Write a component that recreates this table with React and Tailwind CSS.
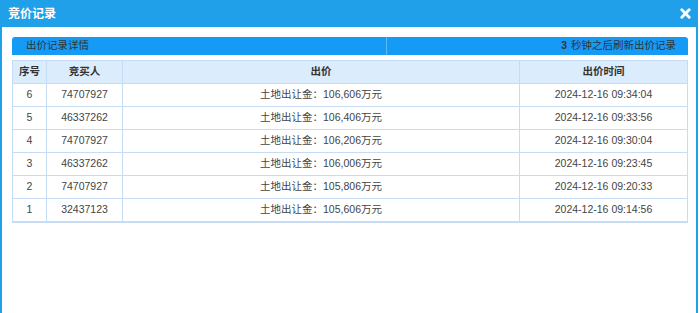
export default function App() {
  const rows = [
    { no: 6, bidder: "74707927", price: "106,606", time: "2024-12-16 09:34:04" },
    { no: 5, bidder: "46337262", price: "106,406", time: "2024-12-16 09:33:56" },
    { no: 4, bidder: "74707927", price: "106,206", time: "2024-12-16 09:30:04" },
    { no: 3, bidder: "46337262", price: "106,006", time: "2024-12-16 09:23:45" },
    { no: 2, bidder: "74707927", price: "105,806", time: "2024-12-16 09:20:33" },
    { no: 1, bidder: "32437123", price: "105,606", time: "2024-12-16 09:14:56" },
  ];

  return (
    <div
      className="w-[698px] h-[313px] flex flex-col bg-white text-[10.5px] text-[#444]"
      style={{ fontFamily: '"Liberation Sans", Arial, "Noto Sans CJK SC", sans-serif' }}
    >
      <div className="h-[27px] shrink-0 bg-[#1fa0e8] flex items-center justify-between pl-[8px] pr-[7px]">
        <span className="text-white font-bold text-[12px]">竞价记录</span>
        <svg width="11" height="11" viewBox="0 0 12 12">
          <path d="M2 2 L10 10 M10 2 L2 10" stroke="#fff" strokeWidth="3.2" strokeLinecap="round" />
        </svg>
      </div>
      <div className="flex-1 border-l-2 border-r-2 border-[#1fa0e8] pl-[10px] pt-[10px]">
        <div className="w-[676px]">
          <div className="h-[18px] bg-[#159bf6] rounded-t-[3px] flex text-[#333]">
            <div className="w-[375px] border-r border-[#5cbaf8] pl-[14px] flex items-center">出价记录详情</div>
            <div className="flex-1 flex items-center justify-end pr-[12px]">
              <span className="font-bold mr-[4px]">3</span>秒钟之后刷新出价记录
            </div>
          </div>
          <table className="mt-[5px] w-[676px] border-collapse table-fixed border border-b-2 border-[#c6dcf5]">
            <colgroup>
              <col className="w-[34px]" />
              <col className="w-[76px]" />
              <col className="w-[397px]" />
              <col />
            </colgroup>
            <thead>
              <tr className="h-[23px] bg-[#dbedfd] text-[#333] font-bold">
                <th className="border border-[#c6dcf5] font-bold">序号</th>
                <th className="border border-[#c6dcf5] font-bold">竞买人</th>
                <th className="border border-[#c6dcf5] font-bold">出价</th>
                <th className="border border-[#c6dcf5] font-bold">出价时间</th>
              </tr>
            </thead>
            <tbody>
              {rows.map((r) => (
                <tr key={r.no} className="h-[23px] text-center">
                  <td className="border border-[#c6dcf5]">{r.no}</td>
                  <td className="border border-[#c6dcf5]">{r.bidder}</td>
                  <td className="border border-[#c6dcf5]">土地出让金：{r.price}万元</td>
                  <td className="border border-[#c6dcf5]">{r.time}</td>
                </tr>
              ))}
            </tbody>
          </table>
        </div>
      </div>
    </div>
  );
}
